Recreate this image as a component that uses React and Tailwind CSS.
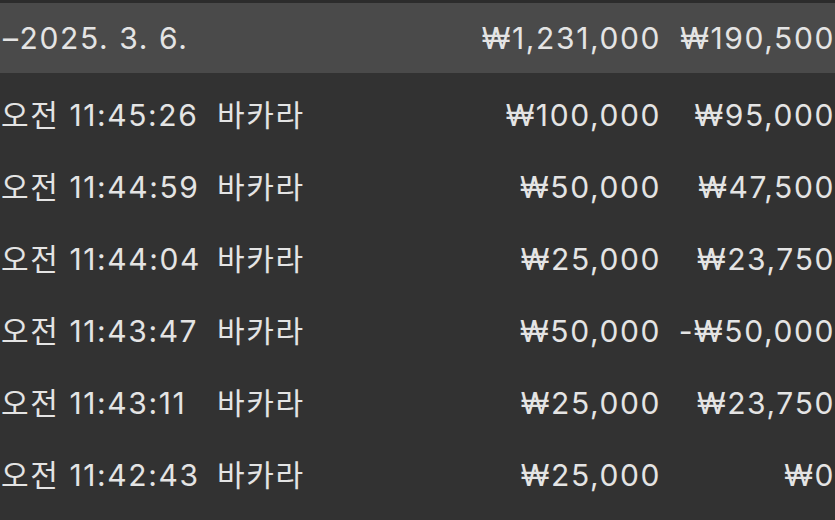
import React from 'react';

const rows = [
  { time: '오전 11:45:26', game: '바카라', bet: '₩100,000', win: '₩95,000' },
  { time: '오전 11:44:59', game: '바카라', bet: '₩50,000', win: '₩47,500' },
  { time: '오전 11:44:04', game: '바카라', bet: '₩25,000', win: '₩23,750' },
  { time: '오전 11:43:47', game: '바카라', bet: '₩50,000', win: '-₩50,000' },
  { time: '오전 11:43:11', game: '바카라', bet: '₩25,000', win: '₩23,750' },
  { time: '오전 11:42:43', game: '바카라', bet: '₩25,000', win: '₩0' },
];

const font = { fontFamily: 'Inter, "Noto Sans CJK KR", sans-serif' };

export default function App() {
  return (
    <div
      className="w-[835px] h-[520px] overflow-hidden bg-[#323232] text-[#e4e4e4] text-[30px] leading-none tracking-[1.6px]"
      style={font}
    >
      <div className="h-[3px] bg-[#2c2c2c]" />
      <div className="h-[70px] bg-[#4a4a4a] flex items-center">
        <div className="flex-1 pl-[3px]">–2025. 3. 6.</div>
        <div className="text-right">₩1,231,000</div>
        <div className="w-[174px] text-right">₩190,500</div>
      </div>
      <div className="pt-[6px]">
        {rows.map((r, i) => (
          <div key={i} className="h-[72px] flex items-center">
            <div className="w-[217px] shrink-0 pl-[1px] whitespace-nowrap">{r.time}</div>
            <div className="flex-1">{r.game}</div>
            <div className="text-right">{r.bet}</div>
            <div className="w-[174px] text-right">{r.win}</div>
          </div>
        ))}
      </div>
    </div>
  );
}
